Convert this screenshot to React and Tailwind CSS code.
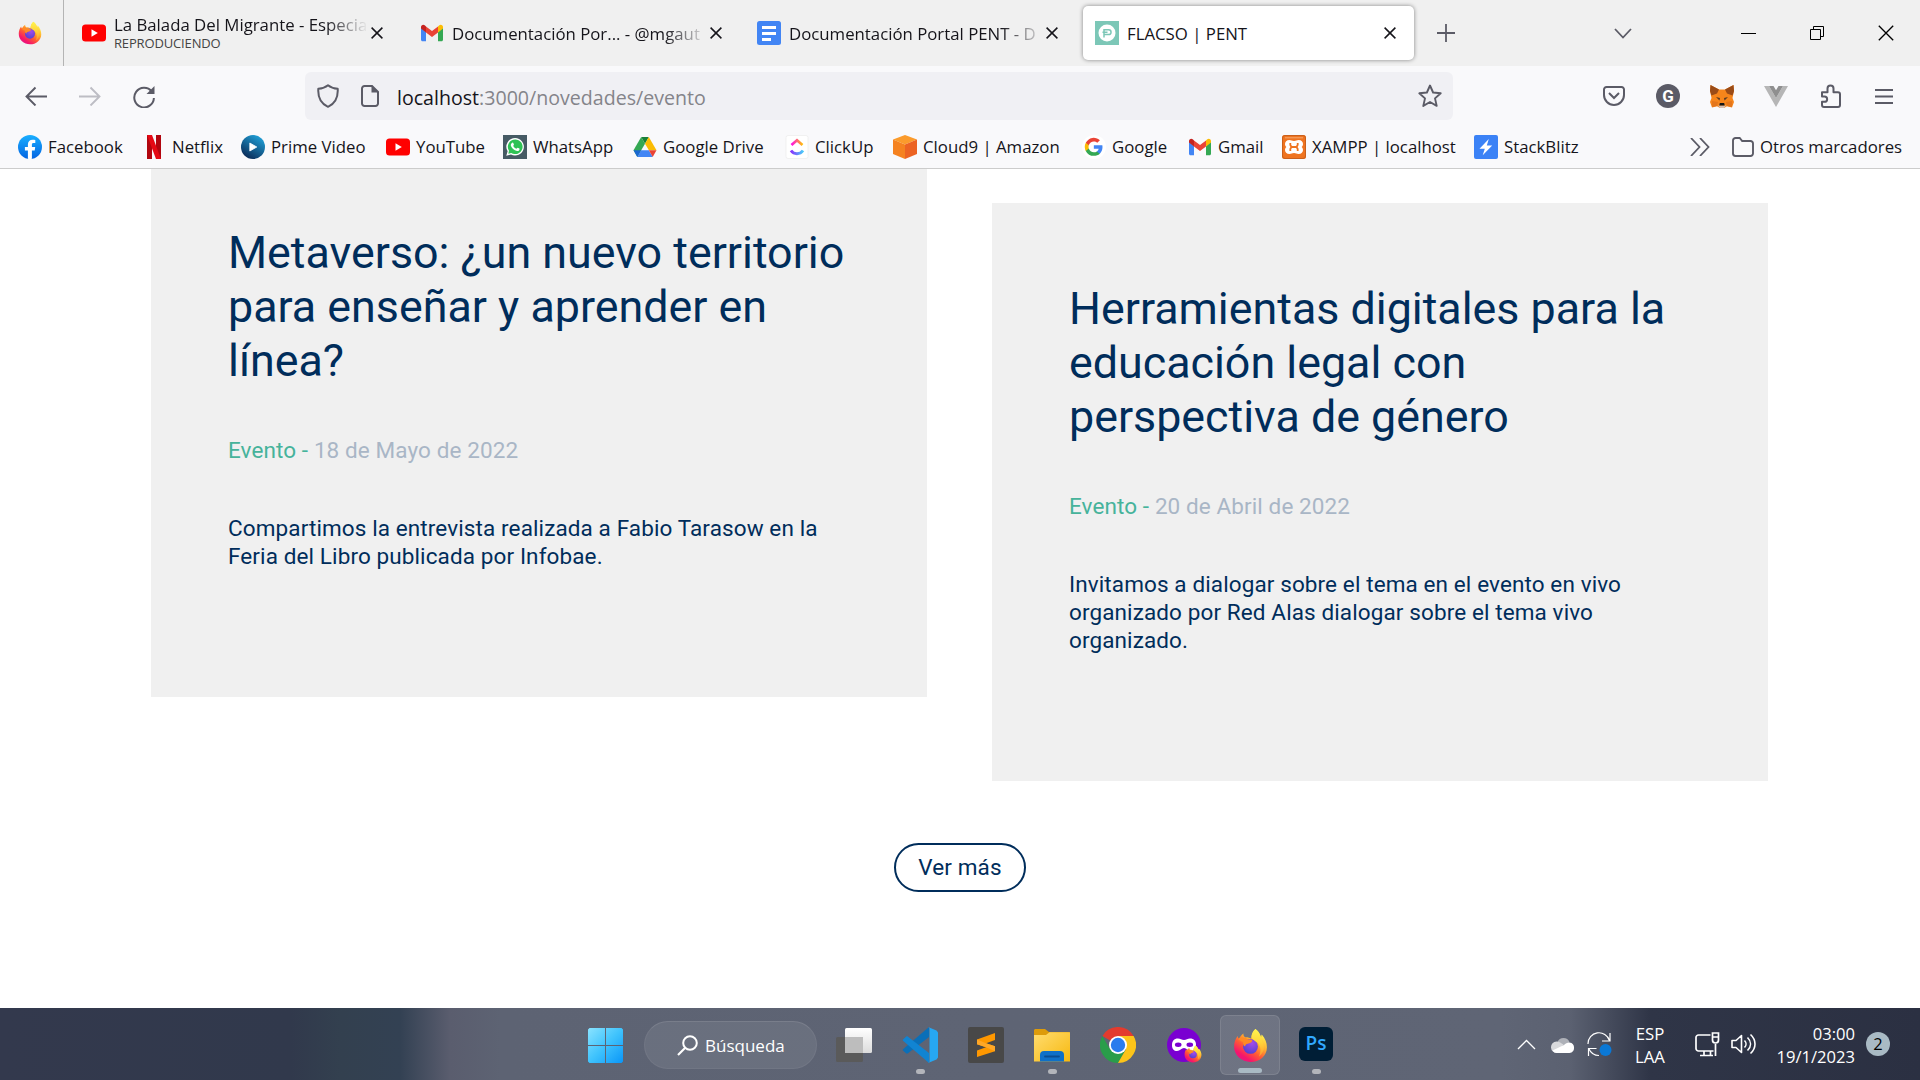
import React from 'react';

function Svg({ w = 24, h = 24, vb, className = '', children }) {
  return (
    <svg width={w} height={h} viewBox={vb || `0 0 ${w} ${h}`} fill="none" className={`block shrink-0 ${className}`}>
      {children}
    </svg>
  );
}

const Firefox = ({ s = 24, id = 'a' }) => (
  <Svg w={s} h={s} vb="0 0 32 32">
    <defs>
      <linearGradient id={`fo${id}`} x1="26" y1="3" x2="7" y2="30" gradientUnits="userSpaceOnUse">
        <stop offset="0.05" stopColor="#fff44f" />
        <stop offset="0.35" stopColor="#ffb02e" />
        <stop offset="0.6" stopColor="#ff5a35" />
        <stop offset="0.85" stopColor="#f5156c" />
        <stop offset="1" stopColor="#e31587" />
      </linearGradient>
      <radialGradient id={`fp${id}`} cx="0.6" cy="0.3" r="0.8">
        <stop offset="0" stopColor="#a54ce8" />
        <stop offset="1" stopColor="#4a3fd0" />
      </radialGradient>
      <linearGradient id={`fy${id}`} x1="24" y1="1" x2="24" y2="26" gradientUnits="userSpaceOnUse">
        <stop offset="0" stopColor="#fff44f" />
        <stop offset="0.5" stopColor="#ffd43a" />
        <stop offset="1" stopColor="#ff9a2c" />
      </linearGradient>
    </defs>
    <path d="M20.5 1c4 3 4.300 5.500 5.200 7.200 0-1 .3-1.700.6-2.200 3.200 3.600 4.700 7.600 4.700 11.500C31 25.500 24.300 31 16 31S1 25 1 17c0-4 1.300-7.300 3.200-9.800.2 1.200.6 2 1.200 2.700C6.500 8 8 6 9.500 5c-.1 1.500.5 2.700 1.500 3.500 2-.3 4 .2 5.500 1.300.4-3.600 2-6.800 4-8.800z" fill={`url(#fo${id})`} />
    <circle cx="16" cy="16.800" r="6.800" fill={`url(#fp${id})`} />
    <path d="M5 9.500c3-1.500 6.500-.8 9 1.200 1.500-.3 3 .2 3.800 1-1 1.600-2.300 2.300-4.300 2.600-1.500.2-2.300 1.200-2.500 2.700-1.500-1-2-2.800-1.600-4.200C7.300 12 5.600 11 5 9.500z" fill="#ff8a25" />
    <path d="M20.500 1c5.500 4.500 4.300 8 7 13 2 4.500 0 9.500-3.700 12 2-4.500 1.700-8.500-.6-11.500-2-2.600-6.300-3.800-6.300-6.500 0-2.800 1.800-5.500 3.600-7z" fill={`url(#fy${id})`} />
  </Svg>
);

const YouTube = () => (
  <Svg>
    <rect x="0" y="3.500" width="24" height="17" rx="3.500" fill="#f00" />
    <path d="M9.500 8.300v7.400l6.300-3.700z" fill="#fff" />
  </Svg>
);

const Gmail = () => (
  <Svg>
    <path d="M1 6.500v12.200c0 .8.700 1.500 1.500 1.500H6v-9z" fill="#4285f4" />
    <path d="M23 6.500v12.200c0 .8-.7 1.500-1.500 1.500H18v-9z" fill="#34a853" />
    <path d="M18 5.500v6l5-3.900V6c0-2-2.300-3-3.700-1.800z" fill="#fbbc04" />
    <path d="M6 11.500v-6l6 4.500 6-4.500v6L12 16z" fill="#ea4335" />
    <path d="M1 6v1.600l5 3.900v-6L4.700 4.200C3.300 3 1 4 1 6z" fill="#c5221f" />
  </Svg>
);

const Docs = () => (
  <Svg>
    <rect width="24" height="24" rx="2.500" fill="#4285f4" />
    <path d="M5 6.500h14M5 12.500h14M5 18.500h9" stroke="#fff" strokeWidth="3" />
  </Svg>
);

const Pent = () => (
  <Svg>
    <rect width="24" height="24" fill="#7cc7b7" />
    <circle cx="12" cy="12" r="8.500" fill="#fff" />
    <path d="M9 16.500V8.800h4.700a2.300 2.300 0 0 1 0 4.700H9M7.500 11.200h5" stroke="#7cc7b7" strokeWidth="1.500" />
  </Svg>
);

const Facebook = () => (
  <Svg>
    <defs>
      <linearGradient id="fb" x1="12" y1="0" x2="12" y2="24" gradientUnits="userSpaceOnUse">
        <stop stopColor="#1aafff" />
        <stop offset="1" stopColor="#0364e2" />
      </linearGradient>
    </defs>
    <circle cx="12" cy="12" r="12" fill="url(#fb)" />
    <path d="M16.700 15.400l.5-3.400h-3.300V9.700c0-1 .4-1.700 1.800-1.700h1.600V4.900c-.9-.1-1.800-.2-2.700-.2-2.800 0-4.700 1.700-4.700 4.700V12H6.900v3.400h3v8.400a12 12 0 0 0 4 0v-8.400z" fill="#fff" />
  </Svg>
);

const Netflix = () => (
  <Svg>
    <path d="M5 0h5v24H5zM14 0h5v24h-5z" fill="#b1060f" />
    <path d="M5 0h5l9 24h-5z" fill="#e50914" />
  </Svg>
);

const Prime = () => (
  <Svg>
    <defs>
      <linearGradient id="pv" x1="18" y1="2" x2="6" y2="22" gradientUnits="userSpaceOnUse">
        <stop stopColor="#1f9ad0" />
        <stop offset="1" stopColor="#0b2f5c" />
      </linearGradient>
    </defs>
    <circle cx="12" cy="12" r="12" fill="url(#pv)" />
    <path d="M8.800 8v8l7-4z" fill="#fff" stroke="#fff" strokeWidth="0.800" strokeLinejoin="round" />
  </Svg>
);

const WhatsApp = () => (
  <Svg>
    <rect width="24" height="24" fill="#465a64" />
    <path d="M12.200 3a8.800 8.800 0 0 0-7.600 13.300L3.300 20.800l4.700-1.200A8.800 8.800 0 1 0 12.200 3z" fill="#fff" />
    <path d="M12.200 4.500a7.300 7.300 0 0 0-6.200 11.200L5.300 18.700l3-.8A7.300 7.300 0 1 0 12.200 4.500z" fill="#2fc255" />
    <path d="M9.300 7.700c.5-.2.900 0 1.100.5l.5 1.300c.2.500-.7 1.100-.6 1.400.7 1.300 1.700 2.200 3.100 2.800.4 0 .9-1.100 1.400-.9l1.600.8c.5.300 0 1.700-.7 2.100-1.100.6-2.500.3-4.200-.7-2-1.200-3.400-3-3.700-4.400-.2-1.200.7-2.600 1.500-2.900z" fill="#fff" />
  </Svg>
);

const Drive = () => (
  <Svg>
    <path d="M8.200 2h7.600L12 8.700z" fill="#188038" />
    <path d="M8.200 2L0.500 15.300 4.300 22 12 8.700z" fill="#34a853" />
    <path d="M15.800 2l7.700 13.300h-7.600L12 8.700z" fill="#fbbc04" />
    <path d="M8.100 15.300h7.800L19.700 22H4.300z" fill="#4285f4" />
    <path d="M8.100 15.300H.5L4.300 22z" fill="#1967d2" />
    <path d="M15.900 15.300h7.600L19.700 22z" fill="#ea4335" />
  </Svg>
);

const ClickUp = () => (
  <Svg>
    <defs>
      <linearGradient id="cu1" x1="6" y1="0" x2="18" y2="0" gradientUnits="userSpaceOnUse">
        <stop stopColor="#ff02f0" />
        <stop offset="1" stopColor="#ffc800" />
      </linearGradient>
      <linearGradient id="cu2" x1="6" y1="0" x2="18" y2="0" gradientUnits="userSpaceOnUse">
        <stop stopColor="#8930fd" />
        <stop offset="1" stopColor="#49ccf9" />
      </linearGradient>
    </defs>
    <rect x="1" y="0.500" width="22" height="23" rx="2" fill="#fff" stroke="#eee" strokeWidth="0.800" />
    <path d="M6.500 10L12 5.200l5.500 4.800" stroke="url(#cu1)" strokeWidth="2.700" />
    <path d="M6 15.500c3 4.300 9 4.300 12 0" stroke="url(#cu2)" strokeWidth="2.900" />
  </Svg>
);

const Cloud9 = () => (
  <Svg>
    <path d="M12 0l12 4.500L12 9.500 0 4.500z" fill="#fb9b2c" />
    <path d="M0 4.500L12 9.500V24L0 19z" fill="#f58220" />
    <path d="M24 4.500L12 9.500V24l12-5z" fill="#ec6323" />
  </Svg>
);

const Google = () => (
  <Svg>
    <circle cx="12" cy="12" r="12" fill="#fff" />
    <g transform="translate(2 2) scale(0.820)">
      <path d="M22.560 12.250c0-.78-.07-1.530-.2-2.250H12v4.260h5.920a5.060 5.060 0 0 1-2.200 3.320v2.770h3.570c2.080-1.920 3.270-4.740 3.270-8.100z" fill="#4285f4" />
      <path d="M12 23c2.970 0 5.460-.98 7.280-2.660l-3.570-2.770c-.98.66-2.230 1.060-3.710 1.060-2.860 0-5.290-1.930-6.160-4.530H2.180v2.840A11 11 0 0 0 12 23z" fill="#34a853" />
      <path d="M5.840 14.090a6.600 6.600 0 0 1 0-4.180V7.070H2.180a11 11 0 0 0 0 9.860z" fill="#fbbc05" />
      <path d="M12 5.380c1.620 0 3.060.56 4.210 1.640l3.150-3.150A11 11 0 0 0 2.180 7.070l3.660 2.840C6.710 7.310 9.140 5.380 12 5.380z" fill="#ea4335" />
    </g>
  </Svg>
);

const Xampp = () => (
  <Svg>
    <rect width="24" height="24" rx="2.500" fill="#ef7420" />
    <rect x="0.500" y="0.500" width="23" height="23" rx="2.500" stroke="#c9601c" />
    <path d="M3 2.800h18" stroke="#f6a96e" />
    <path d="M7.500 5c1.800 0 2.500 1 4.500 1s2.700-1 4.500-1C19.500 5 21 6.800 21 9c0 1.400-.6 2.400-1.400 3 .8.600 1.400 1.600 1.400 3 0 2.300-1.500 4-4.500 4-1.800 0-2.500-1-4.500-1s-2.700 1-4.500 1C4.500 19 3 17.300 3 15c0-1.400.6-2.400 1.400-3C3.600 11.400 3 10.400 3 9c0-2.200 1.500-4 4.500-4z" fill="#fff" />
    <path d="M8.300 8v1.800c0 1 1 1.200 1 2.200s-1 1.200-1 2.200V16M15.700 8v1.800c0 1-1 1.200-1 2.200s1 1.200 1 2.200V16M9 12h6" stroke="#ef7420" strokeWidth="1.800" />
  </Svg>
);

const StackBlitz = () => (
  <Svg>
    <rect width="24" height="24" rx="2" fill="#3b82f6" />
    <path d="M14.800 4L5.500 13.800h5.300L8.700 20.300l9.500-9.800h-5.400z" fill="#fff" />
  </Svg>
);

const Cross = ({ s = 12, c = '#15141a', sw = 1.5 }) => (
  <Svg w={s} h={s} vb="0 0 12 12">
    <path d="M.6.6l10.800 10.800M11.400.6L.6 11.400" stroke={c} strokeWidth={sw} />
  </Svg>
);

function Tab({ icon, close, text, sub, width, textWidth, active, mask = '' }) {
  return (
    <div className={`${width} flex h-[54px] shrink-0 items-center ${active ? 'rounded-[5px] bg-white shadow-[0_0_4px_rgba(0,0,0,0.45)]' : ''} pl-3`}>
      {icon}
      <div className={`${textWidth} ml-[8px] whitespace-nowrap text-[16.800px] text-[#15141a]`}>
        <div className={`${mask} ${sub ? 'leading-[20px]' : 'pt-px leading-[22px]'}`}>{text}</div>
        {sub && <div className="text-[13px] leading-[17px] tracking-[-0.150px] text-[#444]">{sub}</div>}
      </div>
      <div className={close}>
        <Cross />
      </div>
    </div>
  );
}

const bookmarks = [
  ['Facebook', Facebook, 'w-[124px]'],
  ['Netflix', Netflix, 'w-[99px]'],
  ['Prime Video', Prime, 'w-[145px]'],
  ['YouTube', YouTube, 'w-[117px]'],
  ['WhatsApp', WhatsApp, 'w-[130px]'],
  ['Google Drive', Drive, 'w-[152px]'],
  ['ClickUp', ClickUp, 'w-[108px]'],
  ['Cloud9 | Amazon', Cloud9, 'w-[189px]'],
  ['Google', Google, 'w-[106px]'],
  ['Gmail', Gmail, 'w-[94px]'],
  ['XAMPP | localhost', Xampp, 'w-[192px]'],
  ['StackBlitz', StackBlitz, 'w-[216px]'],
];

function TabStrip() {
  return (
    <div className="flex h-[66px] items-center bg-[#f0f0f0]">
      <div className="flex h-full w-[64px] items-center border-r border-[#b4b4b4] pl-[18px]">
        <Firefox id="t" />
      </div>
      <div className="w-[6px]" />
      <Tab icon={<YouTube />} text="La Balada Del Migrante - Especia" sub="REPRODUCIENDO" width="w-[338px]" textWidth="w-[255px]" close="ml-[2px]" mask="w-[258px] [mask-image:linear-gradient(to_left,transparent_4px,black_46px)]" />
      <Tab icon={<Gmail />} text="Documentación Por... - @mgaut" width="w-[337px]" textWidth="w-[255px]" close="ml-[3px]" mask="w-[256px] [mask-image:linear-gradient(to_left,transparent,black_44px)]" />
      <Tab icon={<Docs />} text="Documentación Portal PENT - D" width="w-[338px]" textWidth="w-[253px]" close="ml-[4px]" mask="w-[256px] [mask-image:linear-gradient(to_left,transparent,black_44px)]" />
      <Tab icon={<Pent />} text="FLACSO | PENT" width="w-[331px]" textWidth="w-[248px]" close="ml-[9px]" active />
      <Svg w={18} h={18} className="ml-[23px]">
        <path d="M9 0v18M0 9h18" stroke="#5b5b66" strokeWidth="1.800" />
      </Svg>
      <Svg w={18} h={11} className="ml-[159px]">
        <path d="M1 1l8 8.500L17 1" stroke="#5b5b66" strokeWidth="1.800" />
      </Svg>
      <div className="ml-[109px] h-px w-[15px] bg-black" />
      <Svg w={14} h={14} className="ml-[54px]">
        <path d="M.5 3.500h10v10H.5zM3.500 3.500v-3h10v10h-3" stroke="#000" />
      </Svg>
      <div className="ml-[54px]">
        <Cross s={16} c="#000" sw={1} />
      </div>
    </div>
  );
}

function NavBar() {
  return (
    <div className="flex h-[58px] items-center bg-[#f9f9fb] pt-[2px]">
      <Svg w={22} h={20} className="ml-[25px]">
        <path d="M22 10.500H2M10.500 1.500l-9 9 9 9" stroke="#5b5b66" strokeWidth="1.900" />
      </Svg>
      <Svg w={22} h={20} className="ml-[32px]">
        <path d="M0 10.500h20M11.500 1.500l9 9-9 9" stroke="#bdbdc4" strokeWidth="1.900" />
      </Svg>
      <Svg w={22} h={22} className="mt-[2px] ml-[32px]">
        <path d="M18.800 5.500A9.800 9.800 0 1 0 20.900 12" stroke="#5b5b66" strokeWidth="2" />
        <path d="M21.500 0v8h-8z" fill="#5b5b66" />
      </Svg>
      <div className="ml-[150px] flex h-[48px] w-[1148px] items-center rounded-[6px] bg-[#f0f0f4]">
        <Svg w={22} h={24} className="ml-[12px]">
          <path d="M11 1.200C8.500 3.300 5 4.500 1.300 4.800c-.5 8 2 14.500 9.700 18 7.700-3.500 10.200-10 9.700-18C17 4.500 13.500 3.300 11 1.200z" stroke="#5b5b66" strokeWidth="2" strokeLinejoin="round" />
        </Svg>
        <Svg w={18} h={22} className="ml-[22px]">
          <path d="M11 1H3.500A2.500 2.500 0 0 0 1 3.500v15A2.500 2.500 0 0 0 3.500 21h11a2.500 2.500 0 0 0 2.500-2.500V7z" stroke="#5b5b66" strokeWidth="2" />
          <path d="M10.500 0v7.500H18z" fill="#5b5b66" />
        </Svg>
        <div className="ml-[18px] pt-[3px] text-[19.600px] leading-6 text-[#15141a]">
          localhost<span className="text-[#84848a]">:3000/novedades/evento</span>
        </div>
        <Svg w={24} h={24} className="mr-[11px] ml-auto">
          <path d="M12 1.500l3.100 7 7.600.8-5.700 5.100 1.700 7.500L12 18l-6.700 3.900L7 14.400 1.300 9.300l7.600-.8z" stroke="#5b5b66" strokeWidth="1.900" strokeLinejoin="round" />
        </Svg>
      </div>
      <Svg w={22} h={20} className="ml-[150px]">
        <path d="M3.500 1h15A2.500 2.500 0 0 1 21 3.500V9a10 10 0 0 1-20 0V3.500A2.500 2.500 0 0 1 3.500 1z" stroke="#5b5b66" strokeWidth="2" />
        <path d="M6 7l5 5 5-5" stroke="#5b5b66" strokeWidth="2" />
      </Svg>
      <div className="ml-[31px] flex size-6 items-center justify-center rounded-full bg-[#5b5b66] font-[Roboto,sans-serif] text-[17px] leading-none font-bold text-white">G</div>
      <Svg w={24} h={24} className="ml-[30px]">
        <path d="M.5 1L9 5.500h6L23.500 1l.5 6-1.500 7 1.500 4-2 5.500-5-1.200-3 1.700h-4l-3-1.700-5 1.200L0 18l1.500-4L0 7z" fill="#f6851b" />
        <path d="M.5 1L9 5.500 7 9.500 1.500 11.500 0 7zM23.500 1L15 5.500l2 4 5.500 2L24 7z" fill="#9a4b17" />
        <path d="M6 13l4 1-.5 2.500zM18 13l-4 1 .5 2.500z" fill="#5a3a24" />
        <path d="M2 17l6 1-1 4-5 1zM22 17l-6 1 1 4 5 1z" fill="#e4761b" />
        <path d="M8 21.500h8L14 24h-4z" fill="#d7c1b3" />
        <path d="M9.800 19h4.400l.5 2.500h-5.400z" fill="#161616" />
      </Svg>
      <Svg w={24} h={21} className="ml-[30px]">
        <path d="M0 0h5l7 12 7-12h5L12 21z" fill="#b6b6b6" />
        <path d="M5 0h4.500L12 4.300 14.500 0H19l-7 12z" fill="#8f8f8f" />
      </Svg>
      <Svg w={22} h={24} className="ml-[32px]">
        <path d="M2 8.300h5.500V4.500a3 3 0 0 1 6 0v3.800H18a2 2 0 0 1 2 2V21a2 2 0 0 1-2 2H4a2 2 0 0 1-2-2v-3.200h2.500a2.600 2.600 0 0 0 0-5.300H2z" stroke="#5b5b66" strokeWidth="2" strokeLinejoin="round" />
      </Svg>
      <Svg w={18} h={15} className="ml-[33px]">
        <path d="M0 1h18M0 7.500h18M0 14h18" stroke="#5b5b66" strokeWidth="1.800" />
      </Svg>
    </div>
  );
}

function Bookmarks() {
  return (
    <div className="flex h-[45px] items-center border-b border-[#cccccc] bg-[#f9f9fb] pt-px pl-[18px] text-[16.800px] leading-6 text-[#15141a]">
      {bookmarks.map(([name, Icon, w]) => (
        <div key={name} className={`${w} flex shrink-0 items-center gap-[6px] whitespace-nowrap`}>
          <Icon />
          <span className="pt-px">{name}</span>
        </div>
      ))}
      <Svg w={20} h={18}>
        <path d="M1 0l8.500 9L1 18M10 0l8.500 9-8.500 9" stroke="#5b5b66" strokeWidth="1.800" />
      </Svg>
      <Svg w={22} h={20} className="mr-[6px] ml-[22px]">
        <path d="M3.500 1h4.200l2.500 3h8.300A2.500 2.500 0 0 1 21 6.500v10a2.500 2.500 0 0 1-2.500 2.500h-15A2.500 2.500 0 0 1 1 16.500v-13A2.500 2.500 0 0 1 3.500 1z" stroke="#5b5b66" strokeWidth="1.900" />
      </Svg>
      <span className="pt-px whitespace-nowrap">Otros marcadores</span>
    </div>
  );
}

function Card({ className, title, date, children }) {
  return (
    <article className={`w-[776px] bg-[#f0f0f0] pl-[77px] text-[#002d5b] ${className}`}>
      <h2 className="text-[44.800px] leading-[54px]">{title}</h2>
      <p className="mt-[48px] text-[22.500px] leading-[28px] tracking-[0.100px] text-[#a9b6c6]">
        <span className="text-[#46b39b]">Evento - </span>
        {date}
      </p>
      <p className="mt-[50px] text-[22.500px] leading-[28px] tracking-[0.110px]">{children}</p>
    </article>
  );
}

function Page() {
  return (
    <main className="h-[839px] overflow-hidden bg-white font-[Roboto,sans-serif]">
      <div className="flex items-start gap-[65px] pl-[151px]">
        <Card className="h-[528px] pt-[57px]" title={<>Metaverso: ¿un nuevo territorio<br />para enseñar y aprender en<br />línea?</>} date="18 de Mayo de 2022">
          Compartimos la entrevista realizada a Fabio Tarasow en la<br />Feria del Libro publicada por Infobae.
        </Card>
        <Card className="mt-[34px] h-[578px] pt-[79px]" title={<>Herramientas digitales para la<br />educación legal con<br />perspectiva de género</>} date="20 de Abril de 2022">
          Invitamos a dialogar sobre el tema en el evento en vivo<br />organizado por Red Alas dialogar sobre el tema vivo<br />organizado.
        </Card>
      </div>
      <div className="mt-[62px] flex justify-center">
        <button className="h-[49px] w-[132px] rounded-full border-2 border-[#002d5b] pt-px text-[22.500px] tracking-[0.100px] text-[#002d5b]">Ver más</button>
      </div>
    </main>
  );
}

function DockItem({ children, mark, active }) {
  return (
    <div className={`relative flex size-[60px] items-center justify-center rounded-[6px] ${active ? 'border border-white/10 bg-white/10' : ''}`}>
      {children}
      {mark && <div className={`absolute bottom-[1px] h-[5px] rounded-full ${active ? 'w-6 bg-[#a9bac4]' : 'w-[9px] bg-[#b3b5bb]'}`} />}
    </div>
  );
}

function Taskbar() {
  return (
    <footer className="flex h-[72px] items-center bg-[linear-gradient(90deg,#33394d_0px,#31394c_290px,#33404f_340px,#334153_400px,#5a5d6e_450px,#5d6373_500px,#5f6575_1500px,#5b6171_1570px,#2f3547_1650px,#2b3042_1920px)] pt-[2px] text-white">
      <Svg w={35} h={35} className="ml-[588px]">
        <defs>
          <linearGradient id="win" x1="0" y1="0" x2="35" y2="35" gradientUnits="userSpaceOnUse">
            <stop stopColor="#8ae3ff" />
            <stop offset="0.500" stopColor="#3fc3fd" />
            <stop offset="1" stopColor="#0a96f8" />
          </linearGradient>
        </defs>
        <path d="M1.500 0H17v17H0V1.500zM18 0h15.500L35 1.500V17H18zM0 18h17v17H1.500L0 33.500zM18 18h17v15.500L33.500 35H18z" fill="url(#win)" />
      </Svg>
      <div className="ml-[21px] flex h-[48px] w-[173px] items-center rounded-full border border-white/5 border-t-white/10 bg-white/8 pl-[32px]">
        <Svg w={21} h={21}>
          <circle cx="13" cy="8" r="6.800" stroke="#fff" strokeWidth="2" />
          <path d="M8 13L1 20" stroke="#fff" strokeWidth="2.200" />
        </Svg>
        <span className="ml-[7px] pt-px text-[17px]">Búsqueda</span>
      </div>
      <div className="ml-[7px] flex items-center gap-[6px]">
        <DockItem>
          <Svg w={36} h={34}>
            <defs>
              <linearGradient id="tv" x1="0" y1="0" x2="0" y2="1">
                <stop stopColor="#fff" />
                <stop offset="1" stopColor="#dcdcdc" />
              </linearGradient>
            </defs>
            <rect y="9" width="27" height="25" rx="1.500" fill="#5a5a5a" />
            <rect x="9" width="27" height="25" rx="1.500" fill="url(#tv)" />
            <path d="M9 9h18v16H9z" fill="#bdbdbd" />
          </Svg>
        </DockItem>
        <DockItem mark>
          <Svg w={36} h={36}>
            <path d="M1 23.500l3 2.800c.7.500 1.500.4 2 0L27 10V0L1.300 22c-.5.500-.7 1-.3 1.500z" fill="#0a6fb8" />
            <path d="M1 12.500l3-2.800c.7-.5 1.500-.4 2 0L27 26v10L1.300 14c-.5-.5-.7-1-.3-1.500z" fill="#1184d2" />
            <path d="M26 0l8.500 3.500L36 5.500v25l-1.500 2L26 36c1-.5 1.500-1 1.500-2V2c0-1-.5-1.500-1.500-2z" fill="#27a7f2" />
          </Svg>
        </DockItem>
        <DockItem>
          <div className="flex size-9 items-center justify-center rounded-[2px] bg-[#484848]">
            <Svg w={20} h={24}>
              <path d="M1 6.500L19 0v7l-9 3.200 9 3v5L1 24v-6.500l9-3.200-9-3z" fill="#ff9800" />
              <path d="M1 11.300l9 3 9 3.900v-5l-9-3-9-3.700z" fill="#ffa726" />
            </Svg>
          </div>
        </DockItem>
        <DockItem mark>
          <Svg w={36} h={34}>
            <defs>
              <linearGradient id="fd" x1="0" y1="0" x2="1" y2="1">
                <stop stopColor="#ffdc70" />
                <stop offset="1" stopColor="#f7b90f" />
              </linearGradient>
            </defs>
            <path d="M0 2.500C0 1.700.7 1 1.500 1H11l4 3h19.500c.8 0 1.500.7 1.500 1.500V12H0z" fill="#dd9b0a" />
            <path d="M0 7h12l3.500-2.700H36V33.500H0z" fill="url(#fd)" />
            <path d="M6 33.500V27a4 4 0 0 1 4-4h16a4 4 0 0 1 4 4v6.500z" fill="#0f70c8" />
            <path d="M11 28.500h14" stroke="#0a4d91" strokeWidth="1.800" strokeLinecap="round" />
          </Svg>
        </DockItem>
        <DockItem>
          <Svg w={36} h={36}>
            <path d="M18 18L2.400 9A18 18 0 0 1 33.600 9z" fill="#e33b2e" />
            <path d="M18 36A18 18 0 0 1 2.400 9l7.800 13.500L18 27l7.800-4.500z" fill="#2a9d4a" />
            <path d="M18 9h15.600a18 18 0 0 1-15.600 27l7.800-13.500z" fill="#fcc419" />
            <circle cx="18" cy="18" r="9" fill="#fff" />
            <circle cx="18" cy="18" r="7.200" fill="#2b7ced" />
          </Svg>
        </DockItem>
        <DockItem>
          <div className="relative">
            <Svg w={34} h={34}>
              <circle cx="17" cy="17" r="17" fill="#7a00d1" />
              <path d="M11 10.500c2.300 0 3.800 1.500 6 1.500s3.700-1.500 6-1.500c4 0 6 2.500 6 6.500s-2 6-5 6-4.500-3-7-3-4 3-7 3-5-2-5-6 2-6.500 6-6.500z" fill="#fff" />
              <ellipse cx="11.200" cy="16.700" rx="3.300" ry="2.200" fill="#7a00d1" />
              <ellipse cx="22.800" cy="16.700" rx="3.300" ry="2.200" fill="#7a00d1" />
            </Svg>
            <div className="absolute -right-[1px] -bottom-[1px]">
              <Firefox s={18} id="p" />
            </div>
          </div>
        </DockItem>
        <DockItem mark active>
          <Firefox s={35} id="b" />
        </DockItem>
        <DockItem mark>
          <div className="-mt-[2px] flex size-[34px] items-center justify-center rounded-[6px] bg-[#001e36] pb-[2px] text-[19px] leading-none font-semibold text-[#31a8ff]">Ps</div>
        </DockItem>
      </div>
      <Svg w={19} h={11} className="-mt-[2px] ml-[171px]">
        <path d="M1 10l8.500-8.500L18 10" stroke="#fff" strokeWidth="1.300" />
      </Svg>
      <Svg w={24} h={16} className="ml-[15px]">
        <path d="M6.500 5a6.500 6.500 0 0 1 12 0L14 12 3 9z" fill="#aeb1b8" />
        <path d="M5.500 4.500c3 0 4.500 1.500 7 3L6 16a5.700 5.700 0 0 1-.5-11.500z" fill="#d8d9dc" />
        <path d="M18.500 5.500a5.300 5.300 0 0 1 0 10.500H6c-2 0-3.500-.8-4.500-2.500L13 8c1.500-1.500 3-2.500 5.500-2.500z" fill="#fff" />
      </Svg>
      <Svg w={25} h={25} className="-mt-[2px] ml-[12px]">
        <path d="M1 12A11 11 0 0 1 22.500 8.500M23 1v8h-8M12 23.500A11 11 0 0 1 2 17M1.500 24v-7.500h8" stroke="#fff" strokeWidth="1.200" />
        <circle cx="18.500" cy="18" r="6" fill="#0a78d6" />
      </Svg>
      <div className="ml-[19px] w-[38px] text-center text-[16.800px] leading-[23px]">ESP<br />LAA</div>
      <Svg w={25} h={25} className="-mt-[2px] ml-[26px]">
        <path d="M15.500 3H3.500A2.500 2.500 0 0 0 1 5.500v11A2.500 2.500 0 0 0 3.500 19h15M9 19v4M15.500 19v4M5 23.500h13M20.500 12v12" stroke="#fff" strokeWidth="1.700" />
        <path d="M17.500 1h6v7a3 3 0 0 1-6 0zM17.500 5h6" stroke="#fff" strokeWidth="1.700" />
      </Svg>
      <Svg w={25} h={22} className="-mt-[2px] ml-[11px]">
        <path d="M1 7.500h4l5.500-5v17l-5.500-5H1zM13.500 7.500c2 2 2 5 0 7M16.500 4.500c4 4 4 9 0 13M19.500 1.500c6 5.500 6 13.500 0 19" stroke="#fff" strokeWidth="1.600" strokeLinejoin="round" />
      </Svg>
      <div className="ml-[19px] w-[80px] text-right text-[16.600px] leading-[23px] whitespace-nowrap">03:00<br />19/1/2023</div>
      <div className="-mt-[2px] ml-[11px] flex size-6 items-center justify-center rounded-full bg-[#a9bac4] text-[16.500px] leading-none text-black">2</div>
    </footer>
  );
}

export default function App() {
  return (
    <div className="flex h-[1080px] w-[1920px] flex-col overflow-hidden font-['Open_Sans','Noto_Sans',sans-serif]">
      <TabStrip />
      <NavBar />
      <Bookmarks />
      <Page />
      <Taskbar />
    </div>
  );
}
